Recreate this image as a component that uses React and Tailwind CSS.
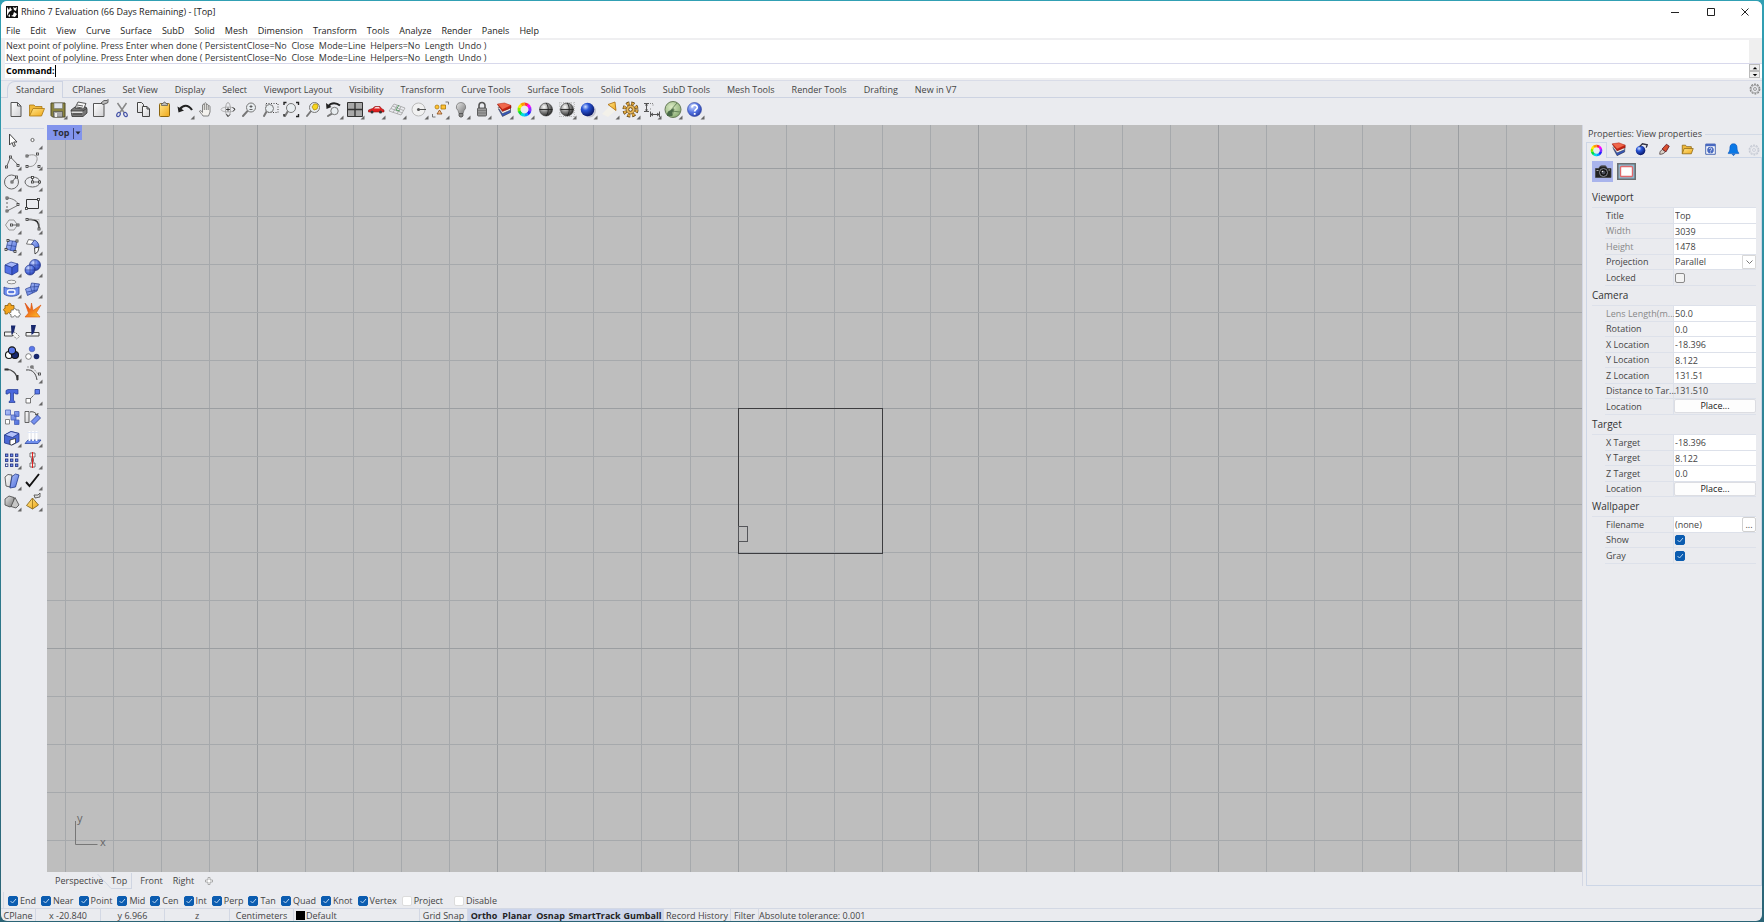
import React from "react";

const line = { fill: "none", stroke: "#666", strokeWidth: 1 };

function Defs() {
  return (
    <svg className="absolute size-0" aria-hidden="true">
      <defs>
        <linearGradient id="paper" x1="0" y1="0" x2="1" y2="1">
          <stop offset="0" stopColor="#fff" />
          <stop offset="1" stopColor="#cfcfd2" />
        </linearGradient>
        <linearGradient id="gold" x1="0" y1="0" x2="1" y2="1">
          <stop offset="0" stopColor="#ffe58a" />
          <stop offset="1" stopColor="#f0a818" />
        </linearGradient>
        <linearGradient id="blue" x1="0" y1="0" x2="1" y2="1">
          <stop offset="0" stopColor="#b4c4f8" />
          <stop offset="1" stopColor="#4a6bdc" />
        </linearGradient>
        <linearGradient id="grey" x1="0" y1="0" x2="1" y2="1">
          <stop offset="0" stopColor="#e8e8e8" />
          <stop offset="1" stopColor="#777" />
        </linearGradient>
        <linearGradient id="flame" x1="0" y1="0" x2="1" y2="1">
          <stop offset="0" stopColor="#e6330f" />
          <stop offset="1" stopColor="#ffc629" />
        </linearGradient>
        <radialGradient id="ball" cx=".35" cy=".3" r=".75">
          <stop offset="0" stopColor="#fff" />
          <stop offset=".5" stopColor="#8a8a8a" />
          <stop offset="1" stopColor="#222" />
        </radialGradient>
        <radialGradient id="blueball" cx=".35" cy=".3" r=".75">
          <stop offset="0" stopColor="#cfe0ff" />
          <stop offset=".35" stopColor="#2a56d8" />
          <stop offset="1" stopColor="#06125e" />
        </radialGradient>
        <radialGradient id="softball" cx=".35" cy=".3" r=".8">
          <stop offset="0" stopColor="#cdd9ff" />
          <stop offset=".5" stopColor="#5676e4" />
          <stop offset="1" stopColor="#2438a0" />
        </radialGradient>
        <radialGradient id="greenball" cx=".4" cy=".35" r=".8">
          <stop offset="0" stopColor="#dcebc6" />
          <stop offset="1" stopColor="#7da366" />
        </radialGradient>
      </defs>
    </svg>
  );
}

const Wheel = ({ cx = 11, cy = 11, r = 5.5, w = 3 }) => {
  const colors = ["#f33", "#f0f", "#83f", "#22f", "#09f", "#0dd", "#0d4", "#8e0", "#fe0", "#f90"];
  return (
    <g fill="none" strokeWidth={w}>
      {colors.map((c, i) => {
        const a = (i / 10) * Math.PI * 2 - Math.PI / 2;
        const b = ((i + 1.08) / 10) * Math.PI * 2 - Math.PI / 2;
        return (
          <path
            key={c}
            stroke={c}
            d={`M${cx + r * Math.cos(a)} ${cy + r * Math.sin(a)}A${r} ${r} 0 0 1 ${cx + r * Math.cos(b)} ${cy + r * Math.sin(b)}`}
          />
        );
      })}
    </g>
  );
};

const Layers = () => (
  <g strokeWidth=".5">
    <path d="M5.500 10l4 7.500 8-4V9z" fill="#3557b8" stroke="#223" />
    <path d="M5 8.500l4.500 6 8-3.500V8z" fill="#fff" stroke="#444" />
    <path d="M4.500 5.500l5 7 8.500-3.500V6.500z" fill="#c4200f" stroke="#611" />
    <path d="M4.500 5l7-1 6.500 2.500-8.500 4z" fill="#f0684c" stroke="#b21" />
  </g>
);

const Lens = ({ x = 13, y = 8, r = 4.5, fill = "#e8edf0" }) => (
  <g>
    <path d={`M${x - r * 0.7} ${y + r * 0.7}L5 17`} stroke="#777" strokeWidth="2" strokeLinecap="round" />
    <circle cx={x} cy={y} r={r} fill={fill} stroke="#777" />
  </g>
);

const Globe = () => (
  <g>
    <circle cx="11" cy="10.500" r="6.500" fill="url(#ball)" stroke="#333" strokeWidth=".6" />
    <path d="M4.500 10.500h13M11 4c3 3 3 10 0 13" fill="none" stroke="#222" strokeWidth=".9" />
  </g>
);

const Node = ({ x, y }) => <rect x={x - 1} y={y - 1} width="2" height="2" fill="#fff" stroke="#333" strokeWidth=".8" />;
const Nodes = ({ at }) => at.map(([x, y]) => <Node key={`${x}-${y}`} x={x} y={y} />);

const TOOLBAR = [
  ["New", false, <path d="M6 3.500h6.500l3.500 3.500v10.500H6zM12.500 3.500V7H16" fill="url(#paper)" stroke="#555" />],
  ["Open", false, <g strokeWidth=".8" stroke="#a97712"><path d="M3.500 17V6h4.500l1.500 1.500h6.500V10" fill="#f0b93a" /><path d="M3.500 17L7 9.500h11.500L15.500 17z" fill="url(#gold)" /></g>],
  ["Save", true, <g><path d="M4 4h14v14H5.500L4 16.500z" fill="#8a8440" stroke="#4f4b28" /><path d="M7 4h8.500v5.500H7z" fill="#dfe3ea" stroke="#777" strokeWidth=".6" /><path d="M6.500 12.500h9V18h-9z" fill="#a9a9a9" stroke="#444" strokeWidth=".6" /><path d="M8 14h2v4H8z" fill="#eee" /></g>],
  ["Print", false, <g strokeWidth=".8" stroke="#333"><path d="M3 11l4-3h11l1 2v4l-4 3.500H4z" fill="#777" /><path d="M7 9l3-6 8 1.500-2.500 5.500z" fill="#f5f5f5" /><path d="M3 12h12l4-3M5 15h9M9 6l6 1M8.500 8l6 1" fill="none" stroke="#333" /><path d="M3.500 12.500h11v1.500h-11z" fill="#ddd" stroke="none" /></g>],
  ["Document properties", false, <g><path d="M4.500 4.500h10l.5 2v11H4.500z" fill="url(#paper)" stroke="#555" /><path d="M12 4l3-2.500h3l1-1v3l-2 1-3 1z" fill="#bbb" stroke="#444" strokeWidth=".8" /></g>],
  ["Cut", false, <g fill="none"><path d="M6.500 4l6.500 9.500M15.500 4L9 13.500" stroke="#888" strokeWidth="1.500" /><ellipse cx="7.500" cy="15.500" rx="1.600" ry="2.200" transform="rotate(30 7.500 15.500)" stroke="#4654a8" strokeWidth="1.200" /><ellipse cx="14.500" cy="15.500" rx="1.600" ry="2.200" transform="rotate(-30 14.500 15.500)" stroke="#4654a8" strokeWidth="1.200" /></g>],
  ["Copy", false, <g fill="url(#paper)" stroke="#444"><path d="M5.500 3.500h4l2 2v8h-6z" /><path d="M10.500 7.500h4.500l2.500 2.500v7.500h-7zM15 7.500V10h2.500" /></g>],
  ["Paste", false, <g><rect x="6.500" y="4.500" width="10" height="13" rx="1" fill="url(#gold)" stroke="#8c650f" /><path d="M8.500 6.500v-2h1.500l1-1.500h1l1 1.500h1.500v2z" fill="#bbb" stroke="#555" strokeWidth=".7" /></g>],
  ["Undo", true, <g><path d="M6 10c3-4 8-5 12 1" fill="none" stroke="#222" strokeWidth="2.200" /><path d="M3.500 7.500l1 6 5.500-2z" fill="#222" /></g>],
  ["Pan", false, <path d="M8 17c-1-2-3.500-4-3.500-5 1-1 2 0 3 1.500V6c.5-1 1.500-1 1.800 0V4.500c.6-1 1.600-1 2 0V6c.5-1 1.600-.8 1.900.3V7c.8-.8 1.800-.3 1.800.7V13l-1.500 4zM9.300 6v5M11.300 6v5M13.200 7v4" fill="#f4f2ee" stroke="#666" strokeWidth=".8" />],
  ["Rotate view", false, <g {...line} strokeWidth=".8"><ellipse cx="11" cy="10.500" rx="7" ry="2.500" stroke="#aaa" /><ellipse cx="11" cy="10.500" rx="2.500" ry="7" stroke="#999" /><path d="M11 8.500v4M9 10.500h4M15.500 8.500l2.500 1.500-2 2.500M9.500 15l1.500 2.500 2-2" stroke="#222" /></g>],
  ["Zoom dynamic", false, <g><Lens y={8.5} x={13} /><path d="M11.500 7.500h3M13 6v3M11.500 10.500h3" stroke="#555" strokeWidth=".9" /></g>],
  ["Zoom window", false, <g><rect x="7" y="4.500" width="12" height="9" fill="none" stroke="#444" strokeDasharray="1 1.500" /><Lens x={10.500} y={9.500} r={4} /></g>],
  ["Zoom extents", false, <g><Lens x={11} y={9} r={4.500} /><path d="M4 6V3.500h2.500M16 3.500h2.500V6M18.500 15v2.500H16M4 15v2.500" fill="none" stroke="#222" strokeWidth="1.400" /></g>],
  ["Zoom selected", false, <g><Lens x={12.500} y={8.500} r={5} /><path d="M10 8l2-3h3l1 2-1 3-3 1z" fill="#f7d51e" stroke="#b29108" strokeWidth=".8" /></g>],
  ["Undo view change", true, <g><Lens x={11.500} y={12} r={3.700} /><path d="M5.500 7c3-4 8-3.500 11.500-.5" fill="none" stroke="#222" strokeWidth="2" /><path d="M3 4l.500 6L8.500 8z" fill="#222" /></g>],
  ["Four viewports", true, <g><path d="M3.500 3.500h15v14h-15z" fill="#a8a8a8" stroke="#333" /><path d="M11 3.500v14M3.500 10.500h15" stroke="#333" strokeWidth="1.400" /></g>],
  ["Set view", true, <g><path d="M3.500 13V11l4-1.500 2.500-2h5l1.500 2 2.500 1.500v2z" fill="#e02020" stroke="#8a1010" strokeWidth=".6" /><path d="M9 9.500l1.500-1.500h3.500l1 1.500z" fill="#f6dada" /><circle cx="7" cy="13" r="1.500" fill="#333" /><circle cx="15.500" cy="13" r="1.500" fill="#333" /></g>],
  ["Construction plane", true, <g fill="none" stroke="#999" strokeWidth=".7"><path d="M3 12l5-7 11 4-4 7zM6.500 7l11 4.500M5 9.500l11.500 4.500M11.500 6L7 13.500M15 7.500L11 15" /><path d="M10 11l3-5M10 11l4 1" stroke="#2b8a3a" /></g>],
  ["Object snap", true, <g><circle cx="10.500" cy="10.500" r="6.500" fill="#f1f1f1" stroke="#bbb" /><path d="M11 10.500h7" stroke="#555" /><circle cx="10.500" cy="10.500" r="1.500" fill="#555" /></g>],
  ["Select objects", true, <g><circle cx="8" cy="8" r="2" fill="#ffc233" stroke="#a97609" strokeWidth=".7" /><path d="M12 6h4.500v4H12z" fill="#ffc233" stroke="#a97609" strokeWidth=".8" /><path d="M8 15l2.500-4 2.500 4z" fill="#f6b98a" stroke="#8a4a10" strokeWidth=".8" /><path d="M3.500 15v3h3M16.500 3h3v2.500" fill="none" stroke="#777" /></g>],
  ["Hide objects", true, <g><path d="M11 3.500a4.500 4.500 0 0 1 3 8l-1 3H9l-1-3a4.500 4.500 0 0 1 3-8z" fill="url(#grey)" stroke="#777" strokeWidth=".8" /><path d="M9 14.500h4v2.500l-1 1h-2l-1-1z" fill="#888" stroke="#444" strokeWidth=".7" /></g>],
  ["Lock objects", true, <g><path d="M8 9V6.500a3 3 0 0 1 6 0V9" fill="none" stroke="#555" strokeWidth="1.600" /><rect x="6.500" y="9" width="9" height="8" rx="1" fill="#999" stroke="#444" strokeWidth=".8" /><path d="M7 11.500h8M7 14h8" stroke="#666" strokeWidth=".6" /></g>],
  ["Layers", true, <Layers />],
  ["Object properties", true, <Wheel cx={10.5} cy={10.5} />],
  ["Shade", false, <Globe />],
  ["Render mesh", true, <g><path d="M3 4h16M3 7h16M3 10.500h16M3 14h16M3 17.500h16M4 3v15M7.500 3v15M15 3v15M18.500 3v15" stroke="#aaa" strokeWidth=".7" strokeDasharray="1 1" /><Globe /></g>],
  ["Render", true, <g><circle cx="12.500" cy="12" r="6.500" fill="#aab" opacity=".6" /><circle cx="10.500" cy="10.500" r="6.800" fill="url(#blueball)" /></g>],
  ["Spotlight", true, <g><path d="M3 15l9-9 5 5-8 7z" fill="#f3f1ea" /><path d="M9 5.500l7-2.500 1 8.500z" fill="url(#gold)" stroke="#a8690c" strokeWidth=".8" /></g>],
  ["Options", true, <g><circle cx="10.500" cy="10.500" r="6.200" fill="none" stroke="#4f3508" strokeWidth="3.600" strokeDasharray="3 1.870" /><circle cx="10.500" cy="10.500" r="6.200" fill="none" stroke="#e0a740" strokeWidth="2.400" strokeDasharray="2.400 2.470" strokeDashoffset="-.3" /><circle cx="10.500" cy="10.500" r="4.300" fill="#e8b85b" stroke="#7c5818" strokeWidth=".7" /><circle cx="10.500" cy="10.500" r="1.800" fill="#edf0f4" stroke="#6c4a10" /></g>],
  ["Dimension", true, <g fill="none" stroke="#444" strokeWidth=".9"><path d="M3 4.500h5M3 12.500h5M5.500 5v7M4.500 6.500l1-1.500 1 1.500M4.500 10.500l1 1.500 1-1.500M9.500 12.500v5.500M18.500 12.500v5.500M10 15.500h8M12 14l-2 1.500 2 1.500M16 14l2 1.500-2 1.500" /><path d="M9 4.500h3v3M9 10h2" strokeDasharray="1 1" stroke="#777" /></g>],
  ["Grasshopper", true, <g><circle cx="11" cy="10.500" r="8" fill="url(#greenball)" stroke="#667a58" /><path d="M5 17c0-5 2-5 4-6l3-2c-1 3-1 4-2 5v3z" fill="#4a6a48" /><path d="M9 11l6-7M12 10l-2 7M10 12l8 1" fill="none" stroke="#55744c" strokeWidth=".8" /></g>],
  ["Help", true, <g><circle cx="10.500" cy="10.500" r="7" fill="url(#softball)" stroke="#2b3f9a" strokeWidth=".6" /><path d="M8 8.500c.2-3.200 5.500-3 5.200.2-.2 1.700-2.400 1.700-2.500 3.800M10.700 14v1.700" fill="none" stroke="#fff" strokeWidth="1.800" /></g>],
];

const PALETTE = [
  ["Select", false, <path d="M8.500 5v11l2.500-2.500 1.500 4 1.800-.8-1.600-3.700h3.300z" fill="#fff" stroke="#444" />],
  ["Point", true, <circle cx="10.500" cy="11" r="1.600" fill="#fff" stroke="#666" />],
  ["Polyline", true, <g><path d="M5.500 17L9.500 7l8 8.500" {...line} /><Nodes at={[[5.500, 17], [9.500, 7], [17, 15.500]]} /></g>],
  ["Curve", true, <g><path d="M5 6c7-3 11 0 10 4s-4 8-10 6" {...line} stroke="#999" /><Nodes at={[[5, 6], [15.500, 4], [5, 16.500], [17, 16.500]]} /></g>],
  ["Circle", true, <g><circle cx="10.500" cy="11" r="7" {...line} /><path d="M11 11l4-5" {...line} /><Nodes at={[[11, 11], [15.500, 6]]} /></g>],
  ["Ellipse", true, <g><ellipse cx="10.500" cy="11" rx="7.500" ry="5" {...line} /><path d="M10.500 6v5h7" {...line} /><Nodes at={[[10.500, 11], [10.500, 6.500], [17.500, 11]]} /></g>],
  ["Arc", true, <g><path d="M6 5c6 0 11 4 11.500 7L6 18" {...line} stroke="#777" /><path d="M6 5v13" {...line} strokeDasharray="2 2" /><Nodes at={[[6, 5], [17, 11.500], [6, 18]]} /></g>],
  ["Rectangle", true, <g><path d="M4.500 6.500h12v9h-12z" {...line} stroke="#333" /><Nodes at={[[4.500, 15.500], [16.500, 6.500]]} /></g>],
  ["Polygon", true, <g><path d="M8 6h5l3.500 5-3.500 5H8l-3.500-5z" {...line} stroke="#999" /><path d="M11 11h6" {...line} /><Nodes at={[[10.500, 11], [17, 11]]} /></g>],
  ["Fillet curves", true, <g><path d="M5 5.500h4c5 0 8 3 8 8V16" fill="none" stroke="#222" strokeWidth="1.500" /><path d="M5 5.500h12V16" fill="none" stroke="#aaa" strokeWidth=".7" /><Nodes at={[[5, 5.500], [17, 15]]} /></g>],
  ["Surface", true, <g><path d="M7 5.500l9 1-2 10-9-2.500z" fill="url(#blue)" stroke="#223a8c" strokeWidth=".7" /><path d="M11.500 6l-2 9.500M6 10l9 1.500" stroke="#223a8c" strokeWidth=".6" /><Nodes at={[[7, 5.500], [16, 6], [5, 14.500], [14, 16.500]]} /></g>],
  ["Loft surface", true, <g strokeWidth=".8"><path d="M4.500 9l2-4.500 6 1-2 4z" fill="#fff" stroke="#555" /><path d="M9.500 9l3-4c3 1.500 4.500 4 4.500 7l-4 1c0-2-1.500-3.500-3.500-4z" fill="url(#blue)" stroke="#223a8c" /><path d="M12.500 13l4.500-1-1 4.500-3 2.500z" fill="#fff" stroke="#222" /></g>],
  ["Box", true, <g stroke="#21368c" strokeWidth=".7"><path d="M4 8l6-3 7 2-6 3.500z" fill="#a5b6fa" /><path d="M4 8l7 2.500V18l-7-2.500z" fill="#5573e6" /><path d="M11 10.500L17 7v7.500L11 18z" fill="#3b58cf" /></g>],
  ["Boolean union", true, <g stroke="#1c2f84" strokeWidth=".7"><circle cx="13" cy="8" r="5.500" fill="url(#softball)" /><circle cx="8" cy="13" r="5" fill="url(#softball)" /><path d="M8 8v10M3 13h10M13 3v10M8 8h10" fill="none" strokeWidth=".5" /></g>],
  ["Extrude", true, <g><ellipse cx="10.500" cy="4" rx="4.500" ry="1.800" fill="#f4f4f4" stroke="#777" strokeWidth=".8" /><path d="M3 9c4 2 11 2 15 0v7c-4 3-11 3-15 0z" fill="#6f8eee" stroke="#2b459c" strokeWidth=".8" /><rect x="6.500" y="12" width="7.500" height="4" rx="1.800" fill="#5878e0" stroke="#fff" strokeWidth="1.400" /></g>],
  ["Mesh", true, <g><path d="M3.500 11l5-2 1-4 8 1-2.500 7-9.500 4.500z" fill="url(#blue)" stroke="#223a8c" strokeWidth=".7" /><path d="M8.500 9L10.500 15M12.500 5.500L12 14M8.500 9l8-.5M5 14l10-2" fill="none" stroke="#223a8c" strokeWidth=".6" /></g>],
  ["Join", false, <g strokeWidth=".8"><path d="M4 6.500h3c-1-3 4-3 3 0h3v4c3-1 3 3 0 2.500V15H9c0-2-2.500-2-2.500 0H4v-3c-2 0-2-2.500 0-2.500z" fill="#f3a51f" stroke="#8a5a08" /><path d="M10 11h2.500c-1-2 3-2 2.500 0H18v3c2 0 2 2.500 0 2.500V18h-3c0-2-2-2-2.500 0H10v-2.500c-2 0-2-2 0-2z" fill="#fff" stroke="#666" /></g>],
  ["Explode", false, <path d="M3 4l5.500 7 1-7 1.500 7.500 8-5.500-4.500 7.500 3.500 4.500H3L6.500 14z" fill="url(#flame)" stroke="#d8560f" strokeWidth=".6" />],
  ["Trim", false, <g><path d="M3.500 11h8v4h-8z" fill="#f4f4f4" stroke="#444" /><path d="M11 13l3-2 4.500 4.500-3 2.500z" fill="#f4f4f4" stroke="#777" strokeDasharray="1.500 1" /><path d="M10 4.500h4.500L13 11l-2.500 3z" fill="#18286e" /></g>],
  ["Split", false, <g><path d="M4 11.500h13v3.500H4z" fill="#f4f4f4" stroke="#444" /><path d="M9 4h5l-2 8-2.500 2z" fill="#18286e" /></g>],
  ["Group", true, <g strokeWidth="1.100" stroke="#111"><circle cx="8" cy="13" r="3.500" fill="#fff" /><circle cx="14" cy="13" r="3.500" fill="#18286e" /><circle cx="11" cy="8.500" r="3.600" fill="#5a78ea" /></g>],
  ["Ungroup", false, <g><circle cx="10" cy="7" r="2.800" fill="#5a78ea" stroke="#4458a8" strokeWidth=".6" /><circle cx="6.500" cy="14.500" r="2.800" fill="#fff" stroke="#555" strokeWidth=".7" /><circle cx="14.500" cy="14.500" r="2.800" fill="#18286e" /></g>],
  ["Edit curve", false, <g><path d="M4 6.500c7-1 12 4 12.500 11" fill="none" stroke="#444" strokeWidth="1.200" /><path d="M3.500 5.500h4v2h-4zM15.500 12h2v5h-2z" fill="#333" /></g>],
  ["Rebuild curve", true, <g><path d="M4 7c7-1 10 4 11 10" fill="none" stroke="#444" /><path d="M5 4h5l7 8" {...line} stroke="#999" strokeDasharray="2 1" /><Nodes at={[[10, 4], [17.500, 11]]} /></g>],
  ["Text", false, <path d="M5 5.500l2-1h10v4.500h-2.500L14 8h-1.500v7.500l1.500 1v1H8v-1l1.500-1V8H7.500L7 9H5z" fill="#4b68dc" stroke="#223a90" strokeWidth=".7" />],
  ["Move", true, <g><path d="M13 4.500h4.500V9H13z" fill="#5a78ea" stroke="#223a90" strokeWidth=".8" /><path d="M4 13.500h4.500V18H4z" fill="#fff" stroke="#555" strokeWidth=".8" /><path d="M8.500 13.500l4-4" stroke="#333" strokeDasharray="1.500 1" /></g>],
  ["Array copies", false, <g strokeWidth=".8"><path d="M4.500 4h5v5h-5zM13.500 5.500H18v5h-4.500zM10 9h5v5h-5zM13.500 14H18v4.500h-4.500z" fill="url(#blue)" stroke="#4a62b8" /><path d="M4.500 13.500h4V18h-4z" fill="#fff" stroke="#666" /></g>],
  ["Orient", false, <g strokeWidth=".9"><path d="M3 5.500h4v11H3z" fill="url(#paper)" stroke="#555" /><path d="M8 6c3-1 6 1 7 3M13 8.500l2.500.800L16 7" fill="none" stroke="#333" /><path d="M9 15.500l6.500-6.500 3 3-6.500 6.500z" fill="#7590ef" stroke="#33499a" /></g>],
  ["Solid edit", true, <g strokeWidth=".8"><path d="M3.500 8L10 4.500l8 2v8L11 18l-7.500-2z" fill="#4b68d4" stroke="#21368c" /><path d="M3.500 8L10 4.500l8 2-6.500 4z" fill="#b4c2fb" stroke="#21368c" /><path d="M9 13l5.500-1.500V16L10.500 18 9 17.500z" fill="#fff" stroke="#333" /></g>],
  ["Project", true, <g><path d="M3 16.500l3-3.500h13l-3 3.500z" fill="#6f8eee" stroke="#2b459c" strokeWidth=".8" /><path d="M7.500 4v10M11 4v10M14.500 4v10" stroke="#fff" strokeWidth="1.800" /><path d="M5.500 5.500h11" stroke="#dfe6f6" /></g>],
  ["Rectangular array", true, <g>{[5, 10, 15].map((y) => [4.5, 9.5, 14.5].map((x) => <rect key={`${x}${y}`} x={x} y={y} width="2.400" height="2.400" fill={x < 5 && y > 14 ? "#fff" : "#6f8bee"} stroke="#1c2c7c" strokeWidth=".8" />))}</g>],
  ["Align", true, <g><path d="M8 4h5v4H8zM8 14h5v4H8zM9.500 9.500h2v3h-2z" fill="#fff" stroke="#555" strokeWidth=".8" /><path d="M10.500 3v16" stroke="#d22" strokeWidth="1.200" /></g>],
  ["Cage edit", true, <g strokeWidth=".8"><path d="M4 7l3-2.500 4 .500L9 17l-4-1z" fill="url(#paper)" stroke="#444" /><path d="M11 6.500l3.500-2.500 3.500 1-3.500 12-5.500 1z" fill="url(#blue)" stroke="#223a8c" /></g>],
  ["Check", true, <path d="M4 12l3.500 4L17 4" fill="none" stroke="#111" strokeWidth="1.900" />],
  ["Primitive solids", true, <g strokeWidth=".8" stroke="#444"><path d="M4 8l4-3 5 1.500v7L9 16l-5-2z" fill="url(#grey)" /><path d="M10 15.500l4-9 4 7.500-3 3z" fill="#c6c6c6" /></g>],
  ["Pyramid", true, <g strokeWidth=".8"><path d="M4.500 14.500L10.500 7l6 7-6 4z" fill="url(#gold)" stroke="#7b5a10" /><path d="M10.500 7v11" stroke="#9a7418" /><path d="M12 4h4l2-2v4l-5 1z" fill="#ddd" stroke="#444" /></g>],
];

function IconButton({ name, more, art }) {
  return (
    <button type="button" aria-label={name} className="flex size-[21px] items-center justify-center">
      <svg viewBox="0 0 22 22" className="size-[22px] shrink-0" aria-hidden="true">
        {art}
        {more && <path d="M20.500 16.500v4h-4z" fill="#666" />}
      </svg>
    </button>
  );
}

const MENUS = ["File", "Edit", "View", "Curve", "Surface", "SubD", "Solid", "Mesh", "Dimension", "Transform", "Tools", "Analyze", "Render", "Panels", "Help"];
const TABS = ["Standard", "CPlanes", "Set View", "Display", "Select", "Viewport Layout", "Visibility", "Transform", "Curve Tools", "Surface Tools", "Solid Tools", "SubD Tools", "Mesh Tools", "Render Tools", "Drafting", "New in V7"];

function Gear({ className }) {
  return (
    <svg viewBox="0 0 12 12" className={className} fill="none" stroke="currentColor" aria-hidden="true">
      <circle cx="6" cy="6" r="4.800" strokeDasharray="2 1" strokeWidth="1.200" />
      <circle cx="6" cy="6" r="3.800" strokeWidth=".6" />
      <circle cx="6" cy="6" r="1.500" strokeWidth=".8" />
    </svg>
  );
}

function TitleBar() {
  return (
    <header className="bg-white text-[#222]">
      <div className="flex h-[21px] items-center pl-[5px]">
        <svg viewBox="0 0 12 12" className="size-3" aria-hidden="true">
          <rect width="12" height="12" fill="#111" />
          <path d="M1 1l2 3 1-3 2 3-3 2-2 4 0-4zM7 1l2 1 2-1-1 4-2-1zM8 6l3 2-2 3-4-1 2-1zM2 10l2-2 0 3z" fill="#fff" />
        </svg>
        <h1 className="ml-[3px] flex-1 text-[9px]">Rhino 7 Evaluation (66 Days Remaining) - [Top]</h1>
        <div className="flex">
          <button type="button" aria-label="Minimize" className="grid h-5 w-9 place-items-center">
            <svg viewBox="0 0 8 8" className="size-2" stroke="#222"><path d="M0 4.500h8" /></svg>
          </button>
          <button type="button" aria-label="Maximize" className="grid h-5 w-[35px] place-items-center">
            <svg viewBox="0 0 8 8" className="size-2" fill="none" stroke="#222"><path d="M.5.5h7v7h-7z" /></svg>
          </button>
          <button type="button" aria-label="Close" className="grid h-5 w-[34px] place-items-center">
            <svg viewBox="0 0 8 8" className="size-2" stroke="#222"><path d="M.5.5l7 7M7.500.5l-7 7" /></svg>
          </button>
        </div>
      </div>
      <nav className="flex h-4 items-center gap-[10px] pt-[2px] pl-[5px] text-[9px]">
        {MENUS.map((m) => (
          <button type="button" key={m}>{m}</button>
        ))}
      </nav>
    </header>
  );
}

function CommandArea() {
  const prompt = "Next point of polyline. Press Enter when done ( PersistentClose=No  Close  Mode=Line  Helpers=No  Length  Undo )";
  return (
    <section className="border-t-2 border-b-2 border-l-4 border-[#efeff1] bg-white text-[9px] text-[#333]">
      <div className="flex h-6 border-b border-[#d8d9ec]">
        <div className="flex-1 whitespace-pre pl-px leading-3">
          <p>{prompt}</p>
          <p>{prompt}</p>
        </div>
        <div className="w-[13px] bg-[#efefef]" />
      </div>
      <div className="flex h-[14px] items-center">
        <label htmlFor="command" className="pl-px font-bold text-black">Command:</label>
        <input id="command" className="h-3 min-w-0 flex-1 border-l border-black outline-none" />
        <div className="flex w-[13px] flex-col">
          {["M1 4h6L4 1z", "M1 1h6L4 4z"].map((d, i) => (
            <button key={d} type="button" aria-label={i ? "Next command" : "Previous command"} className="grid h-[7px] w-[11px] place-items-center border border-[#bbb] bg-[#eee]">
              <svg viewBox="0 0 8 5" className="h-1 w-[6px]"><path d={d} /></svg>
            </button>
          ))}
        </div>
      </div>
    </section>
  );
}

function Toolbar() {
  return (
    <section className="border-t border-[#d9dce8]">
      <div className="flex h-[17px] items-stretch border-b border-[#cdd3e2] pl-[6px] text-[9px]">
        {TABS.map((t, i) => (
          <button
            type="button"
            key={t}
            className={i === 0 ? "-mb-px rounded-tl-lg border-x border-t border-[#cdd3e2] bg-[#eaebef] px-2" : "pt-px pr-2 pl-[9px]"}
          >
            {t}
          </button>
        ))}
        <button type="button" aria-label="Toolbar options" className="mr-px ml-auto text-[#888]">
          <Gear className="size-3" />
        </button>
      </div>
      <div className="flex h-[27px] w-[704px] items-start justify-between pt-px pl-1">
        {TOOLBAR.map(([name, more, art]) => (
          <IconButton key={name} name={name} more={more} art={art} />
        ))}
      </div>
    </section>
  );
}

function Viewport() {
  const cols = Array.from({ length: 64 }, (_, i) => i);
  const rows = Array.from({ length: 36 }, (_, i) => i);
  return (
    <section className="relative min-h-[600px] flex-1 overflow-hidden bg-[#bebebe]">
      <svg className="absolute inset-0 size-full" aria-label="Drawing canvas" shapeRendering="crispEdges">
        {cols.map((i) => (
          <rect key={i} x={Math.round(18 + i * 48.04)} y="0" width="1" height="100%" fill={i % 5 === 4 ? "#9b9ea1" : "#a6a9ac"} />
        ))}
        {rows.map((i) => (
          <rect key={i} x="0" y={43 + i * 48} width="100%" height="1" fill={i % 5 === 0 ? "#9b9ea1" : "#a6a9ac"} />
        ))}
        <rect x="691.500" y="283.500" width="144" height="145" fill="none" stroke="#3d3d40" />
        <rect x="691.500" y="401.500" width="9" height="15" fill="none" stroke="#55565a" />
      </svg>
      <button type="button" className="absolute top-0 left-0 flex h-[15px] w-[35px] items-center bg-[#8294ec] pl-[6px] text-[9px] font-bold text-[#2b2d3a]">
        Top
        <svg viewBox="0 0 9 14" className="ml-auto h-[14px] w-[9px]" aria-hidden="true">
          <path d="M.5 2v11" stroke="#3a4070" />
          <path d="M2.500 5.500h5l-2.500 3z" fill="#222" />
        </svg>
      </button>
      <svg viewBox="0 0 40 48" className="absolute bottom-5 left-6 h-12 w-10 fill-[#666] text-[11px]" aria-hidden="true">
        <path d="M4.500 17v23.500h22" fill="none" stroke="#777" />
        <text x="6" y="18">y</text>
        <text x="29" y="42">x</text>
      </svg>
    </section>
  );
}

function ViewportTabs() {
  return (
    <nav className="flex h-[17px] items-center pt-px pl-2 text-[9px]">
      <button type="button">Perspective</button>
      <svg viewBox="0 0 14 16" className="-ml-[6px] h-4 w-[14px] self-start" fill="none" stroke="#cfd5e2" aria-hidden="true"><path d="M.5 1L14 15.500" /></svg>
      <button type="button" className="h-4 self-start border-r border-b border-[#cfd5e2] pr-1">Top</button>
      <button type="button" className="ml-2">Front</button>
      <button type="button" className="ml-[10px]">Right</button>
      <button type="button" aria-label="New viewport" className="ml-[11px]">
        <svg viewBox="0 0 8 8" className="size-2" fill="#fff" stroke="#999" strokeWidth=".8"><path d="M3 .5h2V3h2.500v2H5v2.500H3V5H.5V3H3z" /></svg>
      </button>
    </nav>
  );
}

function CheckBox({ id, on, plain }) {
  return (
    <span className="grid size-[10px] shrink-0">
      <input
        id={id}
        type="checkbox"
        defaultChecked={on}
        className={
          "peer size-[10px] appearance-none rounded-[2px] border [grid-area:1/1] checked:border-[#0b5cb0] checked:bg-[#0b5cb0] " +
          (plain ? "border-[#dcdcdc] bg-white" : "border-[#8a8a8a] bg-[#f3f3f3]")
        }
      />
      <svg viewBox="0 0 10 10" className="pointer-events-none invisible size-[10px] [grid-area:1/1] peer-checked:visible" aria-hidden="true">
        <path d="M2.500 5l2 2 3.500-4" fill="none" stroke="#b9d3ee" />
      </svg>
    </span>
  );
}

const PANEL_TABS = [
  ["Properties", <Wheel cx={11} cy={11} r={4.8} w={2.6} />],
  ["Layers", <Layers />],
  ["Rendering", <g><circle cx="10" cy="12" r="5" fill="url(#blueball)" /><path d="M9 8l3-3 5 1-1 3" fill="none" stroke="#334" strokeWidth="1.400" /></g>],
  ["Materials", <g><path d="M6 16c0-3 1-4 3-5l3 2c-1 2-3 3-6 3z" fill="#d8d0c8" stroke="#433" strokeWidth=".8" /><path d="M8.500 10.500L13 5.500l3 2-3.500 6z" fill="#d9502f" stroke="#512" strokeWidth=".8" /></g>],
  ["Libraries", <g stroke="#8c6510" strokeWidth=".8"><path d="M5.500 15.500v-9H9l1 1.500h5v2" fill="#f0b93a" /><path d="M5.500 15.500l2-5.500h9.500l-2 5.500z" fill="url(#gold)" /></g>],
  ["Help", <g><path d="M6 5.500h10v10.500H6z" fill="#fff" stroke="#3f5fae" /><path d="M6 5h10v2.500H6z" fill="#4969c0" /><circle cx="11" cy="11.500" r="3.500" fill="#4969c0" /><path d="M9.800 10.500c.2-1.600 2.700-1.400 2.500.2-.2.900-1.200.8-1.200 1.800M11 13.200v1" fill="none" stroke="#fff" strokeWidth=".8" /></g>],
  ["Notifications", <path d="M11 5c3 0 3.800 2 3.800 5 0 2 .7 3.500 1.700 4.500v.8H5.500v-.8c1-1 1.700-2.500 1.700-4.500 0-3 .8-5 3.800-5zM9.500 16h3l-1.500 1.500z" fill="#0a78e6" stroke="#0a55b8" strokeWidth=".6" />],
];

const slug = (...parts) => parts.join("-").toLowerCase().replace(/[^a-z0-9]+/g, "-");

const SECTIONS = [
  ["Viewport", [["Title", "text", "Top"], ["Width", "text", "3039", true], ["Height", "text", "1478", true], ["Projection", "select", "Parallel"], ["Locked", "check", false]]],
  ["Camera", [["Lens Length(m...", "text", "50.0", true], ["Rotation", "text", "0.0"], ["X Location", "text", "-18.396"], ["Y Location", "text", "8.122"], ["Z Location", "text", "131.51"], ["Distance to Tar...", "output", "131.510"], ["Location", "button", "Place..."]]],
  ["Target", [["X Target", "text", "-18.396"], ["Y Target", "text", "8.122"], ["Z Target", "text", "0.0"], ["Location", "button", "Place..."]]],
  ["Wallpaper", [["Filename", "file", "(none)"], ["Show", "check", true], ["Gray", "check", true]]],
];

function Field({ id, kind, value }) {
  if (kind === "text") return <input id={id} defaultValue={value} className="h-full w-full bg-white pl-px outline-none" />;
  if (kind === "output") return <output id={id} className="pl-px">{value}</output>;
  if (kind === "check") return <span className="flex h-full items-center pl-px"><CheckBox id={id} on={value} /></span>;
  if (kind === "button")
    return <button id={id} type="button" className="h-[14px] w-full rounded-[2px] border border-[#dcdde2] bg-[#fdfdfd] leading-3 text-[#222]">{value}</button>;
  if (kind === "select")
    return (
      <span className="grid h-full">
        <select id={id} defaultValue={value} className="h-full w-full appearance-none bg-white pl-px outline-none [grid-area:1/1]">
          <option>{value}</option>
          <option>Perspective</option>
        </select>
        <svg viewBox="0 0 14 14" className="pointer-events-none size-[14px] justify-self-end [grid-area:1/1]" fill="none" aria-hidden="true">
          <path d="M.5.5h13v13H.5z" stroke="#d8d8d8" />
          <path d="M4.500 5.500l3 3 3-3" stroke="#777" />
        </svg>
      </span>
    );
  return (
    <span className="flex h-full bg-white">
      <input id={id} defaultValue={value} className="min-w-0 flex-1 pl-px outline-none" />
      <button type="button" aria-label="Browse" className="w-[14px] rounded-[2px] border border-[#d0d0d0] bg-white leading-3">...</button>
    </span>
  );
}

function PropertiesPanel() {
  return (
    <aside className="mb-[3px] flex w-[180px] shrink-0 flex-col border-l border-[#d3d7e3] pl-[3px] text-[9px] text-[#444]">
      <div className="flex h-[17px] items-center pt-px pl-[2px]">
        <h2>Properties: View properties</h2>
        <span className="ml-[3px] h-px flex-1 bg-[#d3dae6]" />
      </div>
      <div className="flex h-4">
        {PANEL_TABS.map(([name, art], i) => (
          <button
            type="button"
            key={name}
            aria-label={name}
            className={
              "flex items-center justify-center border-[#cdd6e6] " +
              (i === 0 ? "w-[21px] border-x border-t" : "w-[23px] border-b")
            }
          >
            <svg viewBox="0 0 22 22" className="size-[21px] shrink-0">{art}</svg>
          </button>
        ))}
        <button type="button" aria-label="Panel options" className="grid flex-1 place-items-center border-b border-[#cdd6e6] text-[#c6cad4]">
          <Gear className="size-3" />
        </button>
      </div>
      <div className="flex-1 border-x border-b border-[#cdd6e6] px-[5px]">
        <div className="flex h-[30px] items-start gap-1 pt-[3px]">
          <button type="button" aria-label="View" className="grid size-[21px] place-items-center bg-[#a9b4ec]">
            <svg viewBox="0 0 20 20" className="size-5" aria-hidden="true">
              <path d="M2.500 6.500h3l2-2.500h5l2 2.500h3.500v9H2.500z" fill="#222" stroke="#444" strokeWidth=".8" />
              <path d="M7.500 4.500l1-1h4l1 1z" fill="#555" />
              <circle cx="10.500" cy="10.500" r="4" fill="#111" stroke="#8a8f99" />
              <circle cx="10.500" cy="10.500" r="2" fill="#4a4f5c" />
              <circle cx="9.500" cy="9.500" r=".8" fill="#eee" />
              <path d="M3.500 8.500h2M15.500 8h1.500" stroke="#aaa" />
            </svg>
          </button>
          <button type="button" aria-label="Frame" className="grid h-[21px] w-[19px] place-items-center">
            <svg viewBox="0 0 19 17" className="h-[17px] w-[19px]" aria-hidden="true">
              <path d="M.8.8h17.400v15.400H.8z" fill="#8db9cf" stroke="#6b6f72" strokeWidth="1.600" />
              <rect x="3.500" y="3.500" width="12" height="10" rx="1" fill="#fff" stroke="#e0696c" strokeWidth="1.400" />
            </svg>
          </button>
        </div>
        {SECTIONS.map(([title, rows]) => (
          <section key={title}>
            <h3 className="flex h-[19px] items-center text-[10px] text-[#333]">{title}</h3>
            <div className="border-t border-[#dde1ea]">
              {rows.map(([label, kind, value, dim]) => {
                const id = slug(title, label);
                return (
                  <div key={label} className="flex odd:h-4 even:h-[15px]">
                    <label
                      htmlFor={id}
                      className={"ml-[13px] flex w-[69px] shrink-0 items-center border-r border-b border-[#dde1ea] pl-px whitespace-nowrap " + (dim ? "text-[#888]" : "")}
                    >
                      {label}
                    </label>
                    <div className="min-w-0 flex-1 border-b border-[#dde1ea]">
                      <Field id={id} kind={kind} value={value} />
                    </div>
                  </div>
                );
              })}
            </div>
          </section>
        ))}
      </div>
    </aside>
  );
}

const SNAPS = [["End", 1], ["Near", 1], ["Point", 1], ["Mid", 1], ["Cen", 1], ["Int", 1], ["Perp", 1], ["Tan", 1], ["Quad", 1], ["Knot", 1], ["Vertex", 1], ["Project", 0], ["Disable", 0]];

const STATUS = [
  ["CPlane", "w-[35px] justify-center"],
  ["x -20.840", "w-[65px] justify-center"],
  ["y 6.966", "w-16 justify-center"],
  ["z", "w-[65px] justify-center"],
  ["Centimeters", "w-16 justify-center"],
  ["Default", "w-[126px] gap-px pl-[2px]"],
  ["Grid Snap", "w-12 justify-center"],
  ["Ortho", "w-[33px] justify-center bg-[#ccd5ec] font-bold text-[#222]"],
  ["Planar", "w-[33px] justify-center bg-[#ccd5ec] font-bold text-[#222]"],
  ["Osnap", "w-[34px] justify-center bg-[#ccd5ec] font-bold text-[#222]"],
  ["SmartTrack", "w-[54px] justify-center bg-[#ccd5ec] font-bold text-[#222]"],
  ["Gumball", "w-[42px] justify-center bg-[#ccd5ec] font-bold text-[#222]"],
  ["Record History", "w-[67px] justify-center"],
  ["Filter", "w-7 justify-center"],
  ["Absolute tolerance: 0.001", ""],
];

function BottomBars() {
  return (
    <footer className="text-[9px]">
      <div className="mt-[3px] ml-[2px] flex h-4 items-center border-l border-[#d5d9e4] pt-px pl-1">
        {SNAPS.map(([name, on]) => (
          <label key={name} className={"flex items-center gap-[2px] " + (name === "Project" ? "mr-[11px]" : "mr-[5px]")}>
            <CheckBox on={!!on} plain />
            {name}
          </label>
        ))}
      </div>
      <div className="flex h-[13px] border-t border-[#d3d8e4] whitespace-nowrap">
        {STATUS.map(([text, cls]) => (
          <button type="button" key={text} className={"flex shrink-0 items-center border-r border-[#d3d8e4] pt-px last:border-r-0 " + cls}>
            {text === "Default" && <span className="size-[9px] bg-black" />}
            {text}
          </button>
        ))}
      </div>
    </footer>
  );
}

export default function App() {
  return (
    <div className="flex min-h-screen flex-col bg-linear-to-b from-[#31a0b4] to-[#2b6476] pt-px pr-[2px] pb-px pl-px font-['Open_Sans','Noto_Sans',sans-serif] text-[#444]">
      <Defs />
      <div className="flex flex-1 flex-col overflow-hidden rounded-md bg-[#eaebef]">
        <TitleBar />
        <CommandArea />
        <Toolbar />
        <main className="flex flex-1">
          <div className="w-[46px] shrink-0">
            <div className="mt-[3px] ml-[2px] h-px w-[41px] bg-[#ced6e6]" />
            <div className="grid h-[384px] w-[43px] grid-cols-2 content-between">
              {PALETTE.map(([name, more, art]) => (
                <IconButton key={name} name={name} more={more} art={art} />
              ))}
            </div>
          </div>
          <div className="flex min-w-0 flex-1 flex-col">
            <Viewport />
            <ViewportTabs />
          </div>
          <PropertiesPanel />
        </main>
        <BottomBars />
      </div>
    </div>
  );
}
